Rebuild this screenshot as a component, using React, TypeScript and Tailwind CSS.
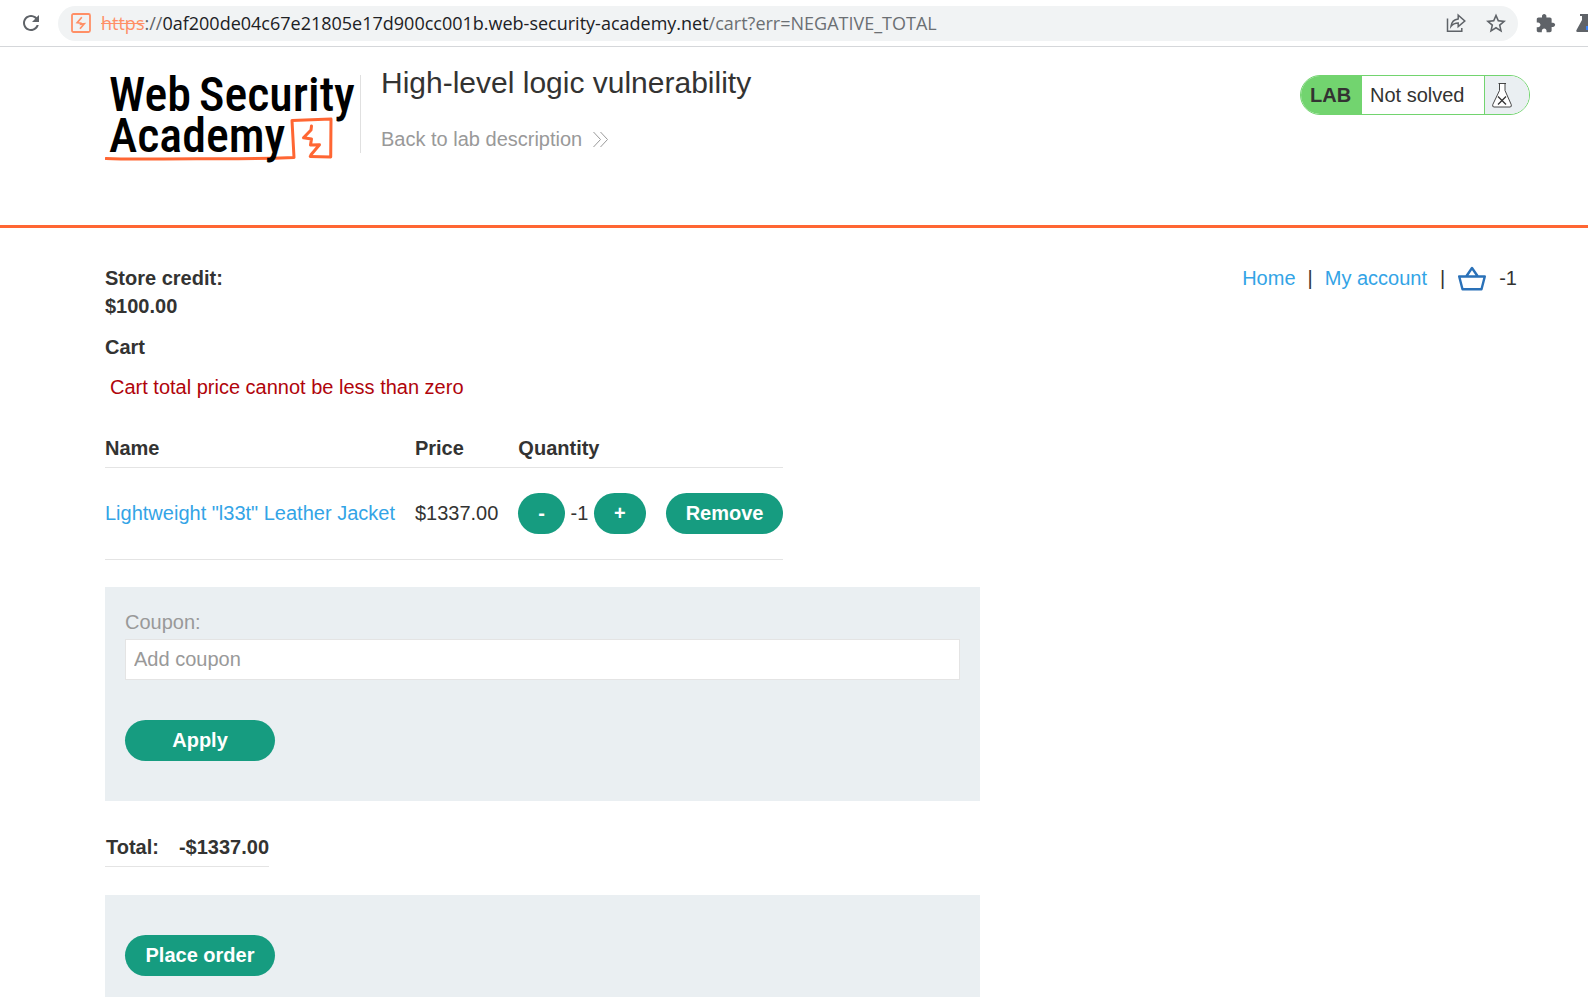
import React from "react";

function BrowserBar() {
  return (
    <div className="flex h-[47px] items-center border-b border-[#d5d7da] bg-white">
      <button type="button" aria-label="Reload" className="ml-[17px] flex h-7 w-7 items-center justify-center text-[#5f6368]">
        <svg viewBox="0 0 24 24" className="h-6 w-6" fill="currentColor">
          <path d="M17.65 6.35C16.2 4.9 14.21 4 12 4c-4.42 0-7.99 3.58-7.99 8s3.57 8 7.99 8c3.73 0 6.84-2.55 7.73-6h-2.08c-.82 2.33-3.04 4-5.65 4-3.31 0-6-2.69-6-6s2.69-6 6-6c1.66 0 3.14.69 4.22 1.78L13 11h7V4l-2.35 2.35z" />
        </svg>
      </button>
      <div className="ml-[13px] flex h-[35px] min-w-0 flex-1 items-center rounded-full bg-[#f1f3f4] pr-3 pl-[13px]">
        <svg viewBox="0 0 20 20" className="h-5 w-5 shrink-0" fill="none" stroke="#ff8f66">
          <rect x="1" y="1" width="18" height="18" rx="1.5" strokeWidth="1.8" />
          <path d="M10.8 4.2 6.2 9.6l3.6.5-.2 1.1 3.6-.4L9 15.8" strokeWidth="1.7" />
        </svg>
        <div className="ml-[10px] flex-1 truncate font-['Open_Sans','Noto_Sans',sans-serif] text-[18px] leading-7 text-[#202124]">
          <span className="text-[#ff8f66] line-through">https</span>
          <span className="text-[#5f6368]">://</span>
          0af200de04c67e21805e17d900cc001b.web-security-academy.net
          <span className="text-[#6b6f73]">/cart?err=NEGATIVE_TOTAL</span>
        </div>
        <button type="button" aria-label="Share" className="text-[#5f6368]">
          <svg viewBox="0 0 20 20" className="h-5 w-5" fill="none" stroke="currentColor" strokeWidth="1.5">
            <path d="M1.5 5.5v12.7h14.3v-3.2" />
            <path d="M5 13.3c.6-4.6 3.2-7 7.2-7.4V2.2L18.8 8l-6.6 5.6V10c-3.2 0-5.4 1-7.2 3.3z" />
          </svg>
        </button>
        <button type="button" aria-label="Bookmark" className="ml-5 text-[#5f6368]">
          <svg viewBox="0 0 24 24" className="h-5 w-5" fill="currentColor">
            <path d="M24 9.2l-8.6-.75L12 .5 8.6 8.46 0 9.2l6.54 5.66L4.58 23.3 12 18.83l7.42 4.47-1.96-8.44L24 9.2zM12 16.6l-4.6 2.8 1.22-5.24-4.06-3.5 5.35-.46L12 5.3l2.1 4.9 5.35.46-4.06 3.52 1.22 5.23z" />
          </svg>
        </button>
      </div>
      <button type="button" aria-label="Extensions" className="ml-[17px] text-[#5f6368]">
        <svg viewBox="0 0 24 24" className="h-[21px] w-[21px]" fill="currentColor">
          <path d="M20.5 11H19V7c0-1.1-.9-2-2-2h-4V3.5C13 2.12 11.88 1 10.5 1S8 2.12 8 3.5V5H4c-1.1 0-1.99.9-1.99 2v3.8H3.5c1.49 0 2.7 1.21 2.7 2.7s-1.21 2.7-2.7 2.7H2V20c0 1.1.9 2 2 2h3.8v-1.5c0-1.49 1.21-2.7 2.7-2.7 1.49 0 2.7 1.21 2.7 2.7V22H17c1.1 0 2-.9 2-2v-4h1.5c1.38 0 2.5-1.12 2.5-2.5S21.88 11 20.5 11z" />
        </svg>
      </button>
      <svg viewBox="0 0 12 20" className="ml-5 h-5 w-3 shrink-0">
        <path d="M4 1h8v18H1.5C.3 19 0 18 .5 17L6 7V3H4z" fill="#5f6368" />
        <rect x="10" y="13" width="2" height="4" fill="#3b82f6" />
      </svg>
    </div>
  );
}

function Logo() {
  return (
    <svg viewBox="0 0 252 108" className="h-[108px] w-[252px] shrink-0" role="img" aria-label="Web Security Academy">
      <g fill="none" stroke="#ff6633" strokeLinecap="round" strokeLinejoin="round" strokeWidth="3">
        <path d="M1 97.5c30 1.500 60 0 100 .3s60-.3 88-1.300L187 59.500l39-1.500-.3 38-20.500-.5" />
        <path d="M206.500 65l-.5 4-7.500 7.800 8 1.200-1 6 9-.3-8.500 10" />
      </g>
      <g fill="#000" fontFamily="'Roboto Condensed', 'Liberation Sans Narrow', Roboto, sans-serif" fontWeight="500" fontSize="48">
        <text x="4" y="50">Web</text>
        <text x="94" y="50">Security</text>
        <text x="4" y="91">Academy</text>
      </g>
    </svg>
  );
}

function LabHeader() {
  return (
    <header className="flex h-[181px] items-start border-b-[3px] border-[#ff6633] pr-[58px] pl-[105px]">
      <div className="flex items-start pt-[14px]">
        <Logo />
      </div>
      <div className="mt-7 ml-[3px] h-[78px] w-px bg-[#e0e0e0]" />
      <div className="ml-5 flex flex-1 flex-col items-start pt-4">
        <h2 className="text-[30px] leading-10">High-level logic vulnerability</h2>
        <a href="#" className="mt-[22px] flex items-center text-[#999]">
          Back to lab description
          <svg viewBox="0 0 15 15" className="ml-[11px] h-[15px] w-[15px]" fill="none" stroke="#999">
            <path d="M.5 0l7 7.5-7 7.5M7.5 0l7 7.5-7 7.5" />
          </svg>
        </a>
      </div>
      <div className="mt-7 flex h-10 overflow-hidden rounded-full border border-[#72d46f] bg-white">
        <span className="flex w-[61px] items-center bg-[#72d46f] pl-[9px] font-bold">LAB</span>
        <p className="flex w-[122px] items-center pl-2">Not solved</p>
        <span className="flex w-[45px] items-center border-l border-[#72d46f] bg-[#eaeff2] pl-[7px]">
          <svg viewBox="0 0 20 26" className="h-[26px] w-5" fill="none" stroke="#333">
            <path d="M6.5 1.5h7.5M7.5 1.5v7L.8 22.5q-.8 2.5 1.2 2.5h16q2 0 1.2-2.5L13 8.5v-7" fill="#fff" strokeWidth=".9" />
            <path d="M6 14.5l8 8M14 14.5l-8 8" strokeWidth="1.3" />
          </svg>
        </span>
      </div>
    </header>
  );
}

const pill =
  "h-[41px] rounded-full bg-[#169c80] px-5 pb-[2px] font-bold text-white";

export default function App() {
  return (
    <div className="flex min-h-screen flex-col bg-white font-['Liberation_Sans',Arial,sans-serif] text-[20px] leading-7 text-[#333332]">
      <BrowserBar />
      <LabHeader />
      <main className="flex flex-1 flex-col items-start pt-9 pr-[71px] pl-[105px]">
        <div className="flex w-full justify-between">
          <p className="font-bold">
            Store credit:
            <br />
            $100.00
          </p>
          <nav className="flex h-7 items-center">
            <a href="#" className="text-[#33a4e6]">Home</a>
            <span className="mx-3">|</span>
            <a href="#" className="text-[#33a4e6]">My account</a>
            <span className="mx-[13px]">|</span>
            <a href="#" aria-label="Basket">
              <svg viewBox="0 0 28 26" className="h-[26px] w-7" fill="none" stroke="#2a71b8" strokeWidth="2.4" strokeLinejoin="round">
                <path d="M1.2 11.5h25.6l-3.3 12.7H4.5zM8.5 11l5.5-8 5.5 8" />
              </svg>
            </a>
            <span className="ml-[13px]">-1</span>
          </nav>
        </div>
        <h1 className="mt-[13px] font-bold">Cart</h1>
        <p className="mt-3 pl-[5px] text-[#b0040b]">Cart total price cannot be less than zero</p>
        <table className="mt-[33px]">
          <thead>
            <tr className="border-b border-[#e4e4e4] text-left">
              <th className="pr-5 pb-[5px]">Name</th>
              <th className="pr-5 pb-[5px]">Price</th>
              <th className="pr-5 pb-[5px]">Quantity</th>
              <th className="pb-[5px]" aria-label="Actions" />
            </tr>
          </thead>
          <tbody>
            <tr className="border-b border-[#e4e4e4]">
              <td className="pr-5 pb-[2px]">
                <a href="#" className="text-[#33a4e6]">Lightweight "l33t" Leather Jacket</a>
              </td>
              <td className="pr-5 pb-[2px]">$1337.00</td>
              <td className="pr-5 whitespace-nowrap">
                <button type="button" className={pill}>-</button> -1{" "}
                <button type="button" className={pill}>+</button>
              </td>
              <td className="py-[25px]">
                <button type="button" className={`${pill} block`}>Remove</button>
              </td>
            </tr>
          </tbody>
        </table>
        <form className="mt-[27px] flex w-full max-w-[875px] flex-col items-start bg-[#eaeff2] px-5 pt-[21px] pb-10" onSubmit={(e) => e.preventDefault()}>
          <label htmlFor="coupon" className="text-[#999]">Coupon:</label>
          <input id="coupon" type="text" placeholder="Add coupon" className="mt-[3px] h-[41px] w-full border border-[#e4e4e4] bg-white px-2 outline-none placeholder:text-[#999]" />
          <button type="submit" className={`${pill} mt-10 w-[150px]`}>Apply</button>
        </form>
        <table className="mt-8">
          <tbody>
            <tr className="border-b border-[#e4e4e4] text-left">
              <th className="pr-5 pb-[5px] pl-px">Total:</th>
              <th className="pb-[5px]">-$1337.00</th>
            </tr>
          </tbody>
        </table>
        <form className="mt-7 w-full max-w-[875px] flex-1 bg-[#eaeff2] px-5 pt-10" onSubmit={(e) => e.preventDefault()}>
          <button type="submit" className={`${pill} w-[150px] whitespace-nowrap`}>Place order</button>
        </form>
      </main>
    </div>
  );
}
